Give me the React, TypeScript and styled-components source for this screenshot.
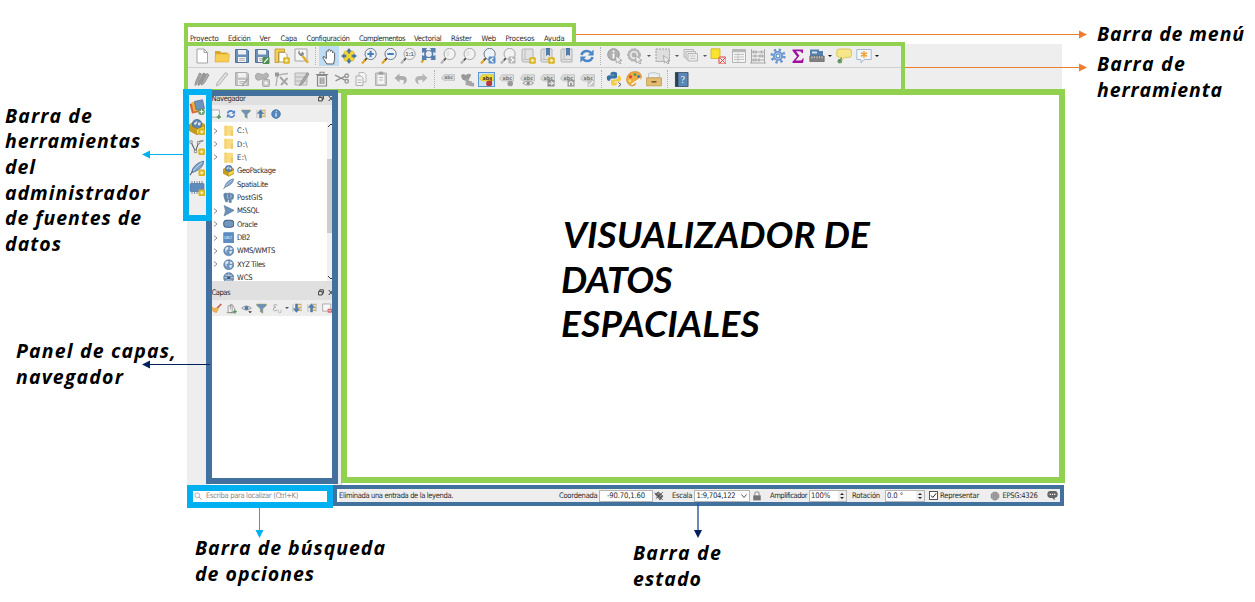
import React, { useLayoutEffect, useRef, useState } from 'react';
import styled, { createGlobalStyle } from 'styled-components';

const GREEN = '#92d050';
const NAVY = '#41719c';
const CYAN = '#00b0f0';
const ORANGE = '#ed7d31';
const DARK = '#002060';

const GlobalStyle = createGlobalStyle`
  * { box-sizing: border-box; }
  html, body { margin: 0; background: #fff; overflow: hidden; }
  body {
    font-family: "DejaVu Sans Condensed", "DejaVu Sans", sans-serif;
    font-stretch: condensed;
    font-size: 7.6px;
    color: #2a2a2a;
  }
`;

const Page = styled.main`
  position: relative;
  width: 1255px;
  height: 602px;
  overflow: hidden;
  background: #fff;
`;

const Window = styled.section`
  width: 877px;
  margin-left: 187px;
  padding-top: 30px;
  display: flex;
  flex-direction: column;
`;

const FitBox = styled.span`
  display: inline-block;
  flex: none;
  white-space: pre;
`;

/* Text whose tracking is adjusted so that it fills a given width. */
function Fit({ w, children }: { w: number; children: string }) {
  const ref = useRef<HTMLSpanElement>(null);
  const [spacing, setSpacing] = useState(0);
  useLayoutEffect(() => {
    if (ref.current) {
      const natural = ref.current.getBoundingClientRect().width;
      setSpacing((w - natural) / children.length);
    }
  }, [w, children]);
  return <FitBox ref={ref} style={{ letterSpacing: `${spacing}px` }}>{children}</FitBox>;
}

/* ---------- icons, all on a 16 × 16 grid ---------- */

const Lens = ({ c = '#6b7b8c', h = '#e0a526', f = '#eef3f8' }) => (
  <>
    <path d="M5.5 10.5 1 15.5" stroke={h} strokeWidth="2.2" />
    <path d="M6 10 4 12.2" stroke="#444" strokeWidth="1.4" />
    <circle cx="9.6" cy="6" r="5.6" fill={f} stroke={c} strokeWidth="1" />
  </>
);
const GrayLens = () => <Lens c="#a5a5a5" h="#b5b5b5" f="#f2f2f2" />;
const Star = ({ x = 12, y = 12 }) => (
  <g transform={`translate(${x} ${y})`}>
    <rect x="-3.3" y="-3.3" width="6.6" height="6.6" rx="1.4" fill="#d9b21c" />
    <path d="M-2 0H2M0-2V2M-1.3-1.3 1.3 1.3M-1.3 1.3 1.3-1.3" stroke="#fff6c8" strokeWidth=".7" />
  </g>
);
const Cursor = ({ c = '#9a9a9a' }) => (
  <path d="M8.5 7.5 15 12.5 12.4 12.8 14 15.4 12.6 16 11.2 13.4 9.4 15Z" fill="#f3f3f3" stroke={c} strokeWidth=".8" />
);
const Tag = ({ bg = '#dedede', fg = '#777', edge = '#b5b5b5' }) => (
  <>
    <path d="M1 6 3.5 3H15.5V9.5H3.5L1 7.8Z" fill={bg} stroke={edge} strokeWidth=".8" />
    <text x="3.8" y="8.4" fontSize="5.6" fontWeight="700" fill={fg}>abc</text>
  </>
);
const Disk = ({ c = '#6b8fb9', d = '#4f7099' }) => (
  <>
    <path d="M1.5 1.5H13L14.5 3V14.5H1.5Z" fill={c} stroke={d} />
    <path d="M4 2H12V6.5H4Z" fill="#eef0f2" />
    <path d="M4 9H12V14H4Z" fill="#f3f3f3" />
    <path d="M5.2 10.6H10.8M5.2 12.3H10.8" stroke="#999" strokeWidth=".7" />
  </>
);
const Globe = ({ c = '#6d93bd' }) => (
  <>
    <circle cx="8" cy="8" r="7" fill={c} stroke="#4d6e94" strokeWidth=".8" />
    <path d="M3 4.5Q6 2 8 3.5L7 6 4.5 8 5.5 11 3.5 9.5ZM9.5 3 13.5 5 12 7 9.5 6.5ZM9 8.5H13L11 13 9 11Z" fill="#dbe8f4" />
  </>
);
const Refresh = () => (
  <>
    <path d="M2.5 7Q3.5 3 8 3 10.5 3 12 5" fill="none" stroke="#4d86c6" strokeWidth="2.6" />
    <path d="M14.6 1.6V7.4H8.8Z" fill="#4d86c6" />
    <path d="M13.5 9Q12.5 13 8 13 5.5 13 4 11" fill="none" stroke="#4d86c6" strokeWidth="2.6" />
    <path d="M1.4 14.4V8.6H7.2Z" fill="#4d86c6" />
  </>
);
const Book = () => (
  <>
    <path d="M2 2Q2 1 3.5 1H13V14H3.5Q2 14 2 13Z" fill="#e2e2e2" stroke="#b2b2b2" />
    <path d="M2.5 12Q3 11.5 4.5 11.5H13M5 1V11.5" fill="none" stroke="#bdbdbd" />
  </>
);
const Ribbon = ({ x = 9 }) => <path d={`M${x - 1.5} 0H${x + 1.5}V7.5L${x} 6 ${x - 1.5} 7.5Z`} fill="#4c7fb8" stroke="#315d8e" strokeWidth=".6" />;
const Feather = () => (
  <>
    <path d="M2.5 12.5Q4 4 14.5 1 15 8 5 12Z" fill="#7fa3ca" stroke="#4a6d94" strokeWidth=".8" />
    <path d="M.8 15.2Q6 8 13 2.4" fill="none" stroke="#d8e4f0" strokeWidth=".8" />
    <path d="M.8 15.2 4 11" stroke="#4a5f75" strokeWidth="1.1" />
  </>
);
const GeoBox = () => (
  <>
    <path d="M.5 5.5 8 2 15.5 5.5V11.5L8 15.5 .5 11.5Z" fill="#d8ae24" stroke="#92720f" strokeWidth=".6" />
    <circle cx="8" cy="5.2" r="4.8" fill="#5d86b3" stroke="#38587d" strokeWidth=".6" />
    <path d="M4.8 4.4 8 1.8 7.8 4.4 6 6ZM9 3.6 12 3.8 11 6.6 9 6Z" fill="#dbe8f4" />
    <path d="M.5 6.8 8 10 15.5 6.8V11.5L8 15.5.5 11.5Z" fill="#f5d848" stroke="#92720f" strokeWidth=".6" />
    <path d="M8 10V15.5L.5 11.5V6.8Z" fill="#c79c1c" />
  </>
);
const Pencil = ({ c = '#b4b4b4' }) => <path d="M11.5 1.5 14 3 5.5 13.5 2.5 15 3 12Z" fill="#ddd" stroke={c} />;
const Hist = ({ up = false }) => (
  <>
    <path d="M9 2.5H14.5M9 7H14.5M9 11.5H14.5" stroke="#d9b35a" strokeWidth="2.4" />
    <path d="M8.5 1V13.5M14.8 1V13.5" stroke="#9a9a9a" strokeWidth=".8" />
    <path d={up ? 'M5.5 14.5V7H2L7 1 12 7H8.8V14.5Z' : 'M5.5 1.5V9H2L7 15 12 9H8.8V1.5Z'} fill="#4d7fb5" stroke="#345c8a" strokeWidth=".5" />
    <path d="M1.5 1.5V14.5" stroke="#a5a5a5" />
  </>
);
const Funnel = () => <path d="M1 1.5H15V3.5L10 8.5V15L6.2 12.8V8.5L1 3.5Z" fill="#6992be" stroke="#b69a3c" strokeWidth=".7" />;

const icons: Record<string, React.ReactNode> = {
  file: <path d="M3 1H10L13.5 4.5V15H3ZM10 1V4.5H13.5" fill="#fff" stroke="#9b9b9b" strokeWidth=".9" />,
  folder: <><path d="M1 3H6L7 4.5H13.5V13.5H1Z" fill="#d9a62a" /><path d="M1.6 6H15.4L14.6 14H1Z" fill="#f7ce52" stroke="#dba72d" strokeWidth=".6" /></>,
  save: <Disk />,
  saveAs: <><Disk /><rect x="8.5" y="9" width="7" height="7" rx="1" fill="#4f8c51" /><path d="M10 14.6 14 10.4" stroke="#fff" strokeWidth="1.2" /></>,
  layout: <><path d="M1 1H10.5V4H4.5V14.5H1Z" fill="#f4cf57" stroke="#b98f1d" strokeWidth=".8" /><path d="M5 4.5H11L13 6.5V14H5Z" fill="#fff" stroke="#a59158" strokeWidth=".8" /><Star x={12.5} y={12.5} /></>,
  wrench: <><path d="M1 1H13V13H1Z" fill="#f6f6f6" stroke="#a5a5a5" /><path d="M8.5 8 14 14.8" stroke="#e0ad2d" strokeWidth="2.4" /><path d="M4 4.5Q5 8 8 8.3L10 6.5Q10 5 8.5 3.5L7 5.5 5.6 4.8 6 2.6Q4.3 3 4 4.5Z" fill="#8a8a8a" /></>,
  hand: <path d="M5.5 15 2 9.5Q1.3 8 2.8 8L5 10V3.4Q5.8 2 6.8 3.2V2Q7.8.7 8.8 2V3Q9.8 1.8 10.8 3V4.4Q12 3.4 12.8 4.8V10.5L11.8 15Z" fill="#fff" stroke="#444" strokeWidth=".8" />,
  pan: <><rect x="3" y="3" width="10" height="10" rx="1.5" fill="#f3d72e" stroke="#d8bd22" strokeWidth=".6" /><path d="M8 0 10.8 3.4H9.2V5.4H6.8V3.4H5.2ZM8 16 5.2 12.6H6.8V10.6H9.2V12.6H10.8ZM0 8 3.4 5.2V6.8H5.4V9.2H3.4V10.8ZM16 8 12.6 10.8V9.2H10.6V6.8H12.6V5.2Z" fill="#50789f" /></>,
  zoomIn: <><Lens /><path d="M6.4 6H12.8M9.6 2.8V9.2" stroke="#4a7db5" strokeWidth="2" /></>,
  zoomOut: <><Lens /><path d="M6.4 6H12.8" stroke="#4a7db5" strokeWidth="2" /></>,
  zoomNative: <><GrayLens /><text x="5.2" y="8" fontSize="5.5" fontWeight="700" fill="#777">1:1</text></>,
  zoomFull: <><path d="M6 8 1.5 14.5" stroke="#e0a526" strokeWidth="2.2" /><path d="M5 5H12V10H5Z" fill="#f1f1f1" /><path d="M2 0H7L5.8 2.2H11.2L10 0H15.5V5L13.3 4V8L15.5 7V12H10.5L11.5 10H6L7 12H2V7L4.2 8V4L2 5Z" fill="#557eab" /><circle cx="8.8" cy="5.9" r="3" fill="#e7edf4" /></>,
  zoomSel: <><GrayLens /><path d="M6.5 3H9.2V8H6.5Z" fill="#e3e3e3" /></>,
  zoomLast: <><Lens /><rect x="8.5" y="8.5" width="7" height="7" rx="1" fill="#5b8ec4" /><path d="M13.4 9.8 10.5 12 13.4 14.2" fill="none" stroke="#fff" strokeWidth="1.2" /></>,
  zoomNext: <><GrayLens /><rect x="8.5" y="8.5" width="7" height="7" rx="1" fill="#b5b5b5" /><path d="M10.8 9.8 13.6 12 10.8 14.2" fill="none" stroke="#fff" strokeWidth="1.2" /></>,
  book: <><Book /><Star x={12.5} y={12.5} /></>,
  bookRibbon: <><Book /><Ribbon /><Star x={12.5} y={12.5} /></>,
  bookmark: <><Book /><Ribbon /></>,
  refresh: <Refresh />,
  identify: <><circle cx="6.5" cy="6.5" r="5.8" fill="#b1b1b1" stroke="#979797" /><path d="M6.5 2.6V4.2M6.5 5.5V10.5" stroke="#fff" strokeWidth="1.7" /><Cursor /></>,
  action: <><circle cx="7" cy="7" r="5.2" fill="#e6e6e6" stroke="#b5b5b5" strokeWidth="2" /><circle cx="7" cy="7" r="6.4" fill="none" stroke="#aaa" strokeWidth="1" strokeDasharray="2 1.7" /><circle cx="7" cy="7" r="2.4" fill="#b5b5b5" /><Cursor /></>,
  select: <><path d="M1 1H14.5V13.5H1Z" fill="#dedede" stroke="#9f9f9f" strokeDasharray="2 1" /><Cursor /></>,
  selectForm: <><path d="M1 1.5H10.5V9H1Z" fill="#ececec" stroke="#b5b5b5" /><path d="M3 3.5H12.5V11H3Z" fill="#ececec" stroke="#b5b5b5" /><path d="M5 5.5H14.5V13H5Z" fill="#ececec" stroke="#b5b5b5" /><path d="M7 8H12.5M7 10.5H12.5" stroke="#c5c5c5" /></>,
  deselect: <><path d="M1 .8H10V10.5H1Z" fill="#f9e32d" stroke="#cdb31c" strokeWidth=".8" /><rect x="9" y="9" width="7" height="7" rx="1" fill="#fbe5e5" stroke="#d64545" /><path d="M10 15 15 10M10.3 10.3 14.7 14.7" stroke="#d64545" strokeWidth="1" /></>,
  table: <><path d="M1.5 1.5H14.5V14.5H1.5Z" fill="#f4f4f4" stroke="#b5b5b5" /><path d="M2 3H14" stroke="#b8b8b8" strokeWidth="2.4" /><path d="M3 6.5H13M3 9H13M3 11.5H13M7 5V14" stroke="#c2c2c2" strokeWidth="1" /></>,
  abacus: <><path d="M1.5 1V15M14.5 1V15M1 4H15M1 8H15M1 12H15M0 15H16" stroke="#a9a9a9" strokeWidth="1" /><path d="M3.5 2.5V5.5M6 2.5V5.5M11.5 2.5V5.5M5 6.5V9.5M10 6.5V9.5M12.5 6.5V9.5M3.5 10.5V13.5M6 10.5V13.5M9 10.5V13.5" stroke="#aeaeae" strokeWidth="1.6" /></>,
  gear: <><circle cx="8" cy="8" r="6.2" fill="none" stroke="#6b96cd" strokeWidth="2.8" strokeDasharray="2.3 2.57" /><circle cx="8" cy="8" r="3.6" fill="#6b96cd" stroke="#6b96cd" strokeWidth="3" /><circle cx="8" cy="8" r="3" fill="none" stroke="#b7cdea" strokeWidth=".9" /><circle cx="8" cy="8" r="1.2" fill="#fff" /></>,
  sigma: <path d="M2.5 1.5H13V5H11.8Q11.4 3.2 9.6 3.2H6L9.4 7.8 5.6 12.6H10Q12 12.6 12.6 10.4H13.8L13 15H2.5V13.8L7 8.4 2.5 2.8Z" fill="#a010a0" />,
  measure: <><path d="M1 1.5H10V3H14V8H1Z" fill="#557fad" /><path d="M3 3.6H8V5.4H3Z" fill="#dce8f3" /><path d="M.8 8H15.2V13.5H.8Z" fill="#808080" stroke="#666" strokeWidth=".7" /><path d="M3 8.2V10.5M5.5 8.2V10M8 8.2V10.5M10.5 8.2V10M13 8.2V10.5" stroke="#ddd" strokeWidth=".8" /></>,
  bubble: <><path d="M3 1H13Q15.6 1 15.6 4V6.5Q15.6 9.4 13 9.4H8.6L5.5 12.6V9.4H3.4Q.7 9.4.7 6.5V4Q.7 1 3 1Z" fill="#f8e788" stroke="#d4bc4e" strokeWidth=".8" /><circle cx="3.8" cy="13.2" r="2.3" fill="#6a9a6a" /><path d="M2.4 13 5.8 9.8" stroke="#447744" /></>,
  annotation: <><path d="M.8 1.5H15.2V11.5H8L5 15V11.5H.8Z" fill="#f4f7fa" stroke="#a5b9cc" /><path d="M8 3V10M4.9 4.7 11.1 8.3M4.9 8.3 11.1 4.7" stroke="#f0a02f" strokeWidth="1.4" /></>,
  pencils: <><path d="M5.5 2 7.5 3 3 13 1 14.5 1.5 11Z" fill="#a5a5a5" stroke="#989898" /><path d="M9.5 2 12 3.4 6.6 13 4 14.5 4.6 11.5Z" fill="#999" stroke="#909090" /><path d="M13 2.4 15 4 10 12.5 7.5 14 8 11.5Z" fill="#adadad" stroke="#959595" /></>,
  pencil: <Pencil />,
  saveGray: <><Disk c="#c2c2c2" d="#adadad" /><path d="M14.5 7 8 15" stroke="#a5a5a5" strokeWidth="1.6" /></>,
  addFeature: <><path d="M1.5 4Q3 1 6 3 10 4.5 12 2 15.5 2.5 14 6 12.5 9 9 8 7 7.5 5.5 9 1 10 1.5 4Z" fill="#b5b5b5" stroke="#a5a5a5" /><rect x="8.5" y="8.5" width="7" height="7" rx="1" fill="#c5c5c5" stroke="#aaa" /><path d="M12 10V14M10 12H14" stroke="#fff" /></>,
  vertex: <><path d="M2 15 3.5 4 14 2.5" fill="none" stroke="#b0b0b0" strokeWidth="1.3" /><rect x="1" y="1.5" width="4" height="4" fill="#999" /><path d="M6 6 13.5 13.8M13.5 7 7 14" stroke="#a5a5a5" strokeWidth="1.9" /></>,
  form: <><path d="M1 2H13V14H1ZM1 6H13M1 10H13" fill="#dcdcdc" stroke="#b5b5b5" /><path d="M13.5 1.5 7 11 5.6 14.6 8.8 12.4 15 3Z" fill="#aaa" stroke="#8d8d8d" strokeWidth=".8" /></>,
  trash: <><path d="M3.5 4.5H12.5V15H3.5Z" fill="#ececec" stroke="#8a8a8a" strokeWidth="1.2" /><path d="M1.8 3.5H14.2M6 3V1.3H10V3M6.2 6.5V13M8 6.5V13M9.8 6.5V13" fill="none" stroke="#8a8a8a" strokeWidth="1.1" /></>,
  scissors: <><path d="M1 4.2 11 9.2M1.5 9.8 11.5 5.2" stroke="#929292" strokeWidth="1.3" /><circle cx="12.7" cy="4.8" r="1.8" fill="none" stroke="#959595" strokeWidth="1.3" /><circle cx="12.7" cy="10.3" r="1.8" fill="none" stroke="#959595" strokeWidth="1.3" /></>,
  copy: <><path d="M6 1.5H11L13 3.5V11H6Z" fill="#f4f4f4" stroke="#b8b8b8" /><path d="M3 5H8L10 7V14.5H3Z" fill="#f4f4f4" stroke="#adadad" /><path d="M4.5 9H8.5M4.5 11.5H8.5" stroke="#b5b5b5" /></>,
  paste: <><path d="M2.5 2H13.5V14.5H2.5Z" fill="#c8c8c8" stroke="#b0b0b0" /><path d="M4.5 4H11.5V13H4.5Z" fill="#f3f3f3" /><path d="M6 1H10V3.2H6ZM6 6.5H10M6 9H10" fill="#999" stroke="#aaa" strokeWidth=".8" /></>,
  undo: <path d="M6.5 2.5V5H10Q14 5.5 13.8 9.3 13.4 12.5 9.5 13.6 11.5 11.5 11 9.8 10.3 8.6 6.5 8.8V11.4L1.5 7Z" fill="#adadad" />,
  redo: <path d="M9.5 2.5V5H6Q2 5.5 2.2 9.3 2.6 12.5 6.5 13.6 4.5 11.5 5 9.8 5.7 8.6 9.5 8.8V11.4L14.5 7Z" fill="#b5b5b5" />,
  tag: <Tag />,
  diagram: <><path d="M1 4Q3 .5 6 3.5 9 .5 12 3L10 7 6.5 9.5 2.5 8Z" fill="#999" /><path d="M6 7.5H9.5V14H6ZM9 9.5H12.5V15H9ZM12 11.5H15V15.5H12Z" fill="#a5a5a5" /></>,
  tagActive: <><Tag bg="#f6df35" fg="#2a2a2a" edge="#d6bd26" /><circle cx="10.8" cy="12.2" r="3.2" fill="#b93a3a" /><path d="M13 6V11" stroke="#c8342e" strokeWidth="1.4" /></>,
  tagPin: <><Tag /><circle cx="12" cy="12.2" r="3" fill="#9a9a9a" /></>,
  tagEye: <><Tag /><path d="M3 12Q8.5 7.5 14.5 12 8.5 16 3 12Z" fill="#ededed" stroke="#999" /><circle cx="8.8" cy="12" r="1.7" fill="#888" /></>,
  tagMove: <><Tag /><rect x="8" y="8.5" width="7.5" height="7" fill="#8f8f8f" /><path d="M9.3 12H12.5M11.8 10 14.3 12 11.8 14" stroke="#fff" fill="none" strokeWidth="1.1" /></>,
  tagRotate: <><Tag /><rect x="8" y="8.5" width="7.5" height="7" fill="#999" /><path d="M10.2 14Q9 10.5 12 10.3 14.5 10.8 13.4 14" stroke="#fff" fill="none" strokeWidth="1.1" /></>,
  tagEdit: <><Tag /><rect x="8" y="8.5" width="7.5" height="7" fill="#c4c4c4" /><path d="M9.5 14.5 14 10" stroke="#fff" strokeWidth="1.3" /></>,
  python: <><path d="M4.5 4V2.2Q5 .8 8 .8 11 .8 11 2.6V6Q11 7.6 9.3 7.6H6Q4 7.6 4 9.8H2.4Q.8 9.6.8 7 .8 4.2 3 4.2H8V3.8Z" fill="#3873a6" /><path d="M11.7 4.5H13Q15 4.8 15 7.6 15 10.6 13 10.6H8V11.4H11V13Q10.6 14.8 7.8 14.8 5 14.6 5 12.8V10Q5 8.4 6.8 8.4H10Q11.7 8.2 11.7 6.4Z" fill="#f7cb3c" /><path d="M12.5 11.5 15 13.5 12.5 15.5" fill="none" stroke="#555" /></>,
  palette: <><path d="M9 .6Q15 .6 15.4 6 15.4 9 12 9 9.5 9 9.5 12 9.5 15 6 15 .6 13.5.6 8 1.5 1 9 .6Z" fill="#efac45" stroke="#c98528" strokeWidth=".7" /><circle cx="4.5" cy="5.8" r="1.7" fill="#d74a3a" /><circle cx="9" cy="3.6" r="1.5" fill="#5d9b50" /><circle cx="3.8" cy="9.8" r="1.4" fill="#f7e06a" /><circle cx="12.6" cy="5.4" r="1.5" fill="#4779b5" /><path d="M14.5 7.5 5.5 13.5" stroke="#fff" strokeWidth="1.5" /></>,
  drawer: <><path d="M2.5 7V2.5L8 1.5 13.5 3V7Z" fill="#e9eff2" stroke="#aebbc2" strokeWidth=".8" /><path d="M.5 6.8H15.5V14.8H.5Z" fill="#e3bd74" stroke="#c29a4f" strokeWidth=".8" /><path d="M5.5 10.8H10.5" stroke="#7d5a20" strokeWidth="1.6" /></>,
  help: <><path d="M1.5.5H15V15.5H1.5Z" fill="#5b87b6" stroke="#2d4158" strokeWidth=".8" /><path d="M1.5.5H4.6V15.5H1.5Z" fill="#2b3f57" /><text x="7.2" y="11.8" fontSize="10" fontFamily="Liberation Serif, serif" fill="#fff">?</text></>,
  layers: <><path d="M.5 5 7 3.5 10 13 3 14.5Z" fill="#d8633b" /><path d="M2.5 3 10 2.5 11.5 11.5 4.5 12.5Z" fill="#efb23a" /><path d="M5.5 2.4 13.5.8 15.5 9.5 7 11Z" fill="#6b93c0" stroke="#4a6f9a" strokeWidth=".7" /><circle cx="12.5" cy="12.7" r="3.3" fill="#639966" /><path d="M10.5 12.7H14.5M12.5 10.7V14.7" stroke="#fff" /></>,
  geopackNew: <><GeoBox /><Star x={12.8} y={12.8} /></>,
  shapeNew: <><path d="M2 3 6.5 12.5 9.5 3.5Q11 1.5 14.5 2" fill="none" stroke="#5c666f" strokeWidth="1.1" /><path d="M.8 1.8H3.2V4.2H.8ZM8.4 2.4H10.8V4.8H8.4ZM5.3 11.2H7.7V13.6H5.3Z" fill="#eee" stroke="#777" strokeWidth=".7" /><Star x={12.6} y={12.8} /></>,
  featherNew: <><Feather /><Star x={12.8} y={12.8} /></>,
  chipNew: <><path d="M3 1V14M5.5 1V14M8 1V14M10.5 1V14M13 1V14" stroke="#7b8fa5" strokeWidth="1" /><rect x="1" y="3.5" width="14" height="8" rx=".8" fill="#5f8bbd" stroke="#5579a3" strokeWidth=".7" /><Star x={12.8} y={12.8} /></>,
  addLayer: <><path d="M1 1.5H13.5V13H1Z" fill="#f7f7f7" stroke="#999" strokeWidth="1.2" /><path d="M9 12.7H16M12.5 9.2V16" stroke="#5c9a5d" strokeWidth="2.4" /></>,
  funnel: <Funnel />,
  collapse: <Hist up />,
  expand: <Hist />,
  info: <><circle cx="8" cy="8" r="7" fill="#5387be" stroke="#3c6a9c" /><path d="M8.6 3.6V5.2M8 6.8V12.2" stroke="#fff" strokeWidth="1.8" /></>,
  drive: <><path d="M2 1H9L14 1.5V15H2Z" fill="#f8dc84" /><path d="M2 1H5V15H2Z" fill="#f4d272" /><path d="M11 7.5H14V15H11Z" fill="#eccb6b" /></>,
  geopack: <GeoBox />,
  feather: <Feather />,
  elephant: <><path d="M1 3Q3 .5 6 2 9 .5 11 2 15 1.5 15 6 15 9 13 10.5L11.5 9.5V14.5H8.5V10.5L6.5 11 6 14 3.8 13.5Q1 8 1 3Z" fill="#6386ab" stroke="#4f7094" strokeWidth=".7" /><path d="M6.5 3.5Q5.5 7 7.5 9.5M10.5 3.5Q12.5 6 10.5 8.5" fill="none" stroke="#cbd9e7" /></>,
  mssql: <path d="M1.5.8 15.5 7.5 1.5 15.2Q5.2 8 1.5.8Z" fill="#6c90b6" stroke="#4a6e95" strokeWidth=".8" />,
  oracle: <rect x="1" y="3" width="14" height="10" rx="4.2" fill="#7396bd" stroke="#3f5f84" strokeWidth="1.4" />,
  db2: <><rect x=".8" y=".8" width="14.4" height="14.4" rx=".7" fill="#5c8cc0" stroke="#6594c6" /><text x="1.6" y="9.4" fontSize="6" fill="#e5eef7">DB2</text></>,
  globe: <Globe />,
  wcs: <><circle cx="8" cy="8" r="7" fill="#6c90b6" stroke="#44648a" /><path d="M8 1V15M1 8H15M3 4Q8 7 13 4M3 12Q8 9 13 12" fill="none" stroke="#e1ebf4" strokeWidth=".9" /><path d="M6 6H10V10H6Z" fill="#38587d" /></>,
  brush: <><path d="M15 1.5 9 7.5" stroke="#c65a4a" strokeWidth="2.4" /><path d="M.5 5.5 5 8 9 6 11 8.5 8 14 3 12.5Z" fill="#efb34a" stroke="#d8953a" strokeWidth=".6" /></>,
  group: <><path d="M3 4H9V14H3Z" fill="#eee" stroke="#888" /><path d="M6.5 9V2H9L12.5 8V14H6.5M1 14H13" fill="none" stroke="#888" /><path d="M13 9.5V15.5M10 12.5H16" stroke="#5c9a5d" strokeWidth="1.8" /></>,
  eye: <><path d="M1 7.5Q8 1 15 7.5 8 13 1 7.5Z" fill="#eee" stroke="#777" /><circle cx="8" cy="7.3" r="3" fill="#517aa5" /><path d="M10.5 12H16L13.2 15Z" fill="#333" /></>,
  epsilon: <><path d="M9 3Q4 1 4 4.2 4 6.2 7 6.4 3 6.5 3 9.5 4 12.5 9 10.5" fill="none" stroke="#a2a2a2" strokeWidth="1.3" /><path d="M10.5 9.5V13.5Q12.5 15.5 14.5 13.5V9.5" fill="none" stroke="#aaa" /></>,
  remove: <><path d="M1 1.5H14V13H1Z" fill="#f7f7f7" stroke="#999" strokeWidth="1.2" /><rect x="9" y="9" width="7" height="6.5" rx="1" fill="#dd6569" /><path d="M10.5 12.3H14.5" stroke="#fff" strokeWidth="1.2" /></>,
  search: <><circle cx="6.5" cy="6.5" r="4.8" fill="none" stroke="#888" strokeWidth="1.2" /><path d="M10 10 15 15" stroke="#888" strokeWidth="1.5" /></>,
  extents: <><path d="M2 5 7 1.5 14.5 8 9.5 14.5Z" fill="#8f8f8f" stroke="#555" /><path d="M1 3 14 14M3 12 14 2M4.5 4.5 7 2M7 7.5 9.5 5M9.5 11 13 8" stroke="#3d3d3d" strokeWidth="1.3" /></>,
  lock: <><path d="M4.5 7.5V4.5Q4.5 1.2 8 1.2 11.5 1.2 11.5 4.5V7.5" fill="none" stroke="#999" strokeWidth="1.8" /><rect x="2" y="7" width="12" height="8" fill="#757575" /></>,
  grid: <><circle cx="8" cy="8" r="7" fill="#858585" /><path d="M1 8H15M8 1V15M2.5 4.5H13.5M2.5 11.5H13.5M4.8 2Q2 8 4.8 14M11.2 2Q14 8 11.2 14" fill="none" stroke="#d0d0d0" strokeWidth=".6" /></>,
  message: <><path d="M4.5 1.5H11.5Q15.5 2 15.5 6.5 15.5 11 11 11.5L11.5 15 7.5 11.5H4.5Q.5 11 .5 6.5.5 2 4.5 1.5Z" fill="#656565" /><path d="M3.8 6.5H5.6M7.1 6.5H8.9M10.4 6.5H12.2" stroke="#fff" strokeWidth="1.8" /></>,
};

const Svg = styled.svg`
  flex: none;
  display: block;
`;
const Icon = ({ name, size = 16 }: { name: string; size?: number }) => (
  <Svg width={size} height={size} viewBox="0 0 16 16" fill="none">{icons[name]}</Svg>
);

/* ---------- window parts ---------- */

const MenuBar = styled.nav`
  height: 14px;
  padding: 3px 0 0 3px;
  display: flex;
  line-height: 11px;
`;
const MenuItem = styled.div<{ $w: number }>`
  flex: none;
  width: ${p => p.$w}px;
`;

const ToolRow = styled.div<{ $h: number; $top?: number }>`
  height: ${p => p.$h}px;
  width: 875px;
  padding: ${p => p.$top ?? 0}px 0 0 5px;
  display: flex;
  align-items: center;
  background: #eee;
  border-bottom: 1px solid #cfcfcf;
`;
const Slot = styled.span<{ $w?: number; $active?: boolean }>`
  flex: none;
  width: ${p => p.$w ?? 20}px;
  height: 20px;
  display: flex;
  align-items: center;
  justify-content: center;
  background: ${p => (p.$active ? '#bfdcf3' : 'transparent')};
`;
const LabelSlot = styled(Slot)`
  height: 15px;
  outline: 1px solid #5a95d6;
  outline-offset: -1px;
  background: #cfe3f6;
`;
const Grip = styled.span<{ $w: number }>`
  flex: none;
  width: ${p => p.$w}px;
  height: 18px;
  display: flex;
  justify-content: center;
  &::before {
    content: '';
    height: 18px;
    border-left: 1px dotted #b3b3b3;
  }
`;
const Caret = styled.span<{ $w: number; $c?: string }>`
  flex: none;
  width: ${p => p.$w}px;
  display: flex;
  justify-content: center;
  &::before {
    content: '';
    border: 2.5px solid transparent;
    border-top-color: ${p => p.$c ?? '#555'};
    border-bottom: 0;
  }
`;

const Body = styled.div`
  height: 394px;
  display: flex;
`;
const SourceBar = styled.aside`
  width: 23px;
  padding: 8px 0 0 2px;
  background: #eee;
  display: flex;
  flex-direction: column;
  flex: none;
`;
const SourceButton = styled.span`
  height: 20.2px;
  display: flex;
`;
const Dock = styled.div`
  width: 123px;
  flex: none;
  display: flex;
  flex-direction: column;
  background: #eee;
`;
const DockTitle = styled.header<{ $h: number }>`
  height: ${p => p.$h}px;
  flex: none;
  display: flex;
  align-items: center;
  padding: ${p => (p.$h > 15 ? 3 : 0)}px 0 0 1.5px;
  background: #e0e0e0;
  line-height: 11px;
`;
const TitleButtons = styled.span`
  margin-left: auto;
  display: flex;
  gap: 4px;
`;
const DockTools = styled.div<{ $h: number }>`
  height: ${p => p.$h}px;
  flex: none;
  display: flex;
  align-items: center;
  margin-left: -1.5px;
`;
const TreeArea = styled.div`
  height: 159px;
  flex: none;
  display: flex;
  overflow: hidden;
  background: #fff;
`;
const Tree = styled.div`
  width: 117px;
  padding-top: 2px;
`;
const TreeRow = styled.div`
  height: 13.36px;
  display: flex;
  align-items: center;
  line-height: 13px;
`;
const TreeArrow = styled.span`
  width: 12.5px;
  display: flex;
  padding-left: 2.5px;
`;
const TreeIcon = styled.span`
  width: 14.5px;
  display: flex;
`;
const ScrollTrack = styled.div`
  width: 6px;
  background: #f0f0f0;
  display: flex;
  flex-direction: column;
  justify-content: space-between;
`;
const ScrollThumb = styled.div`
  height: 74px;
  margin-bottom: 11px;
  background: #cdcdcd;
`;
const LayerArea = styled.div`
  flex: 1;
  background: #fff;
`;
const Splitter = styled.div`
  width: 9px;
  background: #f0f0f0;
  border-right: 1px solid #c9c9c9;
`;
const Canvas = styled.div`
  flex: 1;
  background: #fff;
  padding: 121px 0 0 219px;
  font: italic 700 37px/44.5px Lato, "Open Sans", sans-serif;
  color: #000;
`;
const CanvasLine = styled.div<{ $x?: number }>`
  height: 44.5px;
  padding-left: ${p => p.$x ?? 0}px;
`;

const StatusBar = styled.footer`
  height: 21px;
  width: 877px;
  padding-left: 6px;
  background: #eee;
  display: flex;
  align-items: center;
  line-height: 11px;
`;
const Cell = styled.span<{ $w: number; $pad?: number }>`
  flex: none;
  width: ${p => p.$w}px;
  padding-left: ${p => p.$pad ?? 0}px;
  display: flex;
  align-items: center;
`;
const Field = styled(Cell)`
  height: 12px;
  background: #fff;
  border: 1px solid #b5b5b5;
  justify-content: space-between;
`;
const SearchField = styled(Cell)`
  height: 12px;
  background: #fff;
  color: #888;
  gap: 4px;
`;
const Spin = styled.span`
  width: 8px;
  height: 10px;
  background: #eee;
  display: flex;
  flex-direction: column;
  align-items: center;
  justify-content: center;
  gap: 2px;
  &::before, &::after { content: ''; border: 2px solid transparent; }
  &::before { border-bottom-color: #222; border-top: 0; }
  &::after { border-top-color: #222; border-bottom: 0; }
`;
const CheckBox = styled.span`
  width: 9px;
  height: 9px;
  background: #fff;
  border: 1px solid #555;
  display: flex;
`;

/* ---------- callouts drawn over the window ---------- */

const Frame = styled.div<{ $x: number; $y: number; $w: number; $h: number; $b: number; $c: string }>`
  position: absolute;
  left: ${p => p.$x}px;
  top: ${p => p.$y}px;
  width: ${p => p.$w}px;
  height: ${p => p.$h}px;
  border: ${p => p.$b}px solid ${p => p.$c};
`;
const Arrows = styled.svg`
  position: absolute;
  left: 0;
  top: 0;
`;
const Callout = styled.div<{ $x: number; $y: number; $lh?: number }>`
  position: absolute;
  left: ${p => p.$x}px;
  top: ${p => p.$y}px;
  display: flex;
  flex-direction: column;
  align-items: flex-start;
  font: italic 700 19.5px/${p => p.$lh ?? 26}px "Open Sans", "Noto Sans", sans-serif;
  color: #000;
`;

const Chevron = ({ d, c = '#888' }: { d: string; c?: string }) => (
  <Svg width="6" height="6" viewBox="0 0 6 6"><path d={d} fill="none" stroke={c} strokeWidth="1" /></Svg>
);
const WindowButtons = () => (
  <TitleButtons>
    <Svg width="6" height="7" viewBox="0 0 6 7"><path d="M1.8 2V.8H5.4V4.2H4.2M.6 2.4H4.2V6H.6Z" fill="none" stroke="#333" strokeWidth=".9" /></Svg>
    <Svg width="5" height="7" viewBox="0 0 5 7"><path d="M.8 1 5 6M5 1 .8 6" stroke="#333" /></Svg>
  </TitleButtons>
);

const menu: [string, number, number][] = [
  ['Proyecto', 28.5, 38], ['Edición', 22.5, 31.5], ['Ver', 11, 21], ['Capa', 16.5, 26],
  ['Configuración', 43, 52.5], ['Complementos', 46, 55], ['Vectorial', 27.5, 37],
  ['Ráster', 20.5, 30.5], ['Web', 14.5, 24], ['Procesos', 29, 38.5], ['Ayuda', 20.5, 25],
];
const fileTools = ['file', 'folder', 'save', 'saveAs', 'layout', 'wrench'];
const mapTools = ['pan', 'zoomIn', 'zoomOut', 'zoomNative', 'zoomFull', 'zoomSel', 'zoomSel', 'zoomLast', 'zoomNext', 'book', 'bookRibbon', 'bookmark', 'refresh'];
const editTools = ['pencils', 'pencil', 'saveGray', 'addFeature', 'vertex', 'form', 'trash', 'scissors', 'copy', 'paste', 'undo', 'redo'];
const labelTools = ['tagPin', 'tagEye', 'tagMove', 'tagRotate', 'tagEdit'];
const tree: [string, string, number, boolean][] = [
  ['drive', 'C:\\', 11, true], ['drive', 'D:\\', 11, true], ['drive', 'E:\\', 10, true],
  ['geopack', 'GeoPackage', 38.5, false], ['feather', 'SpatiaLite', 31, false], ['elephant', 'PostGIS', 25.5, false],
  ['mssql', 'MSSQL', 22, true], ['oracle', 'Oracle', 20.5, true], ['db2', 'DB2', 13, true],
  ['globe', 'WMS/WMTS', 38, true], ['globe', 'XYZ Tiles', 28, true], ['wcs', 'WCS', 15.5, false],
];

export default function App() {
  return (
    <Page>
      <GlobalStyle />
      <Window>
        <MenuBar>
          {menu.map(([label, w, slot]) => <MenuItem key={label} $w={slot}><Fit w={w}>{label}</Fit></MenuItem>)}
        </MenuBar>
        <ToolRow $h={24} $top={1}>
          {fileTools.map(n => <Slot key={n}><Icon name={n} /></Slot>)}
          <Grip $w={7} />
          <Slot $active><Icon name="hand" size={17} /></Slot>
          {mapTools.map((n, i) => <Slot key={i} $w={19.85}><Icon name={n} /></Slot>)}
          <Grip $w={8} />
          <Slot><Icon name="identify" /></Slot>
          <Slot $w={21}><Icon name="action" /></Slot>
          <Caret $w={6} />
          <Slot $w={22}><Icon name="select" /></Slot>
          <Caret $w={6} />
          <Slot $w={22}><Icon name="selectForm" /></Slot>
          <Caret $w={6} />
          <Slot $w={21}><Icon name="deselect" /></Slot>
          {['table', 'abacus', 'gear', 'sigma', 'measure'].map(n => <Slot key={n} $w={19.6}><Icon name={n} /></Slot>)}
          <Caret $w={7} $c="#111" />
          <Slot><Icon name="bubble" /></Slot>
          <Slot><Icon name="annotation" /></Slot>
          <Caret $w={7} $c="#111" />
        </ToolRow>
        <ToolRow $h={23}>
          {editTools.map(n => <Slot key={n} $w={19.95}><Icon name={n} /></Slot>)}
          <Grip $w={6.5} />
          <Slot><Icon name="tag" size={14} /></Slot>
          <Slot><Icon name="diagram" size={15} /></Slot>
          <LabelSlot $w={17}><Icon name="tagActive" size={15} /></LabelSlot>
          <Slot $w={23}><Icon name="tagPin" size={15} /></Slot>
          {labelTools.slice(1).map(n => <Slot key={n}><Icon name={n} size={15} /></Slot>)}
          <Grip $w={6.5} />
          {['python', 'palette', 'drawer'].map(n => <Slot key={n}><Icon name={n} size={16} /></Slot>)}
          <Grip $w={7} />
          <Slot><Icon name="help" size={15} /></Slot>
        </ToolRow>
        <Body>
          <SourceBar>
            {['layers', 'geopackNew', 'shapeNew', 'featherNew', 'chipNew'].map(n => <SourceButton key={n}><Icon name={n} /></SourceButton>)}
          </SourceBar>
          <Dock>
            <DockTitle $h={14}><Fit w={34}>Navegador</Fit><WindowButtons /></DockTitle>
            <DockTools $h={17}>
              {['addLayer', 'refresh', 'funnel', 'collapse', 'info'].map(n => <Slot key={n} $w={15}><Icon name={n} size={10} /></Slot>)}
            </DockTools>
            <TreeArea>
              <Tree>
                {tree.map(([icon, label, w, open]) => (
                  <TreeRow key={label}>
                    <TreeArrow>{open && <Chevron d="M1 .5 4 3 1 5.5" />}</TreeArrow>
                    <TreeIcon><Icon name={icon} size={11.5} /></TreeIcon>
                    <Fit w={w}>{label}</Fit>
                  </TreeRow>
                ))}
              </Tree>
              <ScrollTrack>
                <Chevron d="M1 5 4 2 7 5" c="#333" />
                <ScrollThumb />
                <Chevron d="M1 1 4 4 7 1" c="#333" />
              </ScrollTrack>
            </TreeArea>
            <DockTitle $h={19}><Fit w={18.5}>Capas</Fit><WindowButtons /></DockTitle>
            <DockTools $h={16}>
              {['brush', 'group', 'eye', 'funnel', 'epsilon'].map(n => <Slot key={n} $w={15}><Icon name={n} size={11} /></Slot>)}
              <Caret $w={6} />
              {['expand', 'collapse', 'remove'].map(n => <Slot key={n} $w={15}><Icon name={n} size={10} /></Slot>)}
            </DockTools>
            <LayerArea />
          </Dock>
          <Splitter />
          <Canvas>
            <CanvasLine $x={2}><Fit w={307}>VISUALIZADOR DE</Fit></CanvasLine>
            <CanvasLine><Fit w={111}>DATOS</Fit></CanvasLine>
            <CanvasLine><Fit w={199}>ESPACIALES</Fit></CanvasLine>
          </Canvas>
        </Body>
        <StatusBar>
          <SearchField $w={146} $pad={1}><Icon name="search" size={8} /><Fit w={92}>Escriba para localizar (Ctrl+K)</Fit></SearchField>
          <Cell $w={220}><Fit w={114}>Eliminada una entrada de la leyenda.</Fit></Cell>
          <Cell $w={40}><Fit w={38.5}>Coordenada</Fit></Cell>
          <Field $w={54} $pad={7}><Fit w={38}>-90.70,1.60</Fit></Field>
          <Cell $w={19} $pad={1}><Icon name="extents" size={10} /></Cell>
          <Cell $w={22}><Fit w={20}>Escala</Fit></Cell>
          <Field $w={56} $pad={1.5}><Fit w={39}>1:9,704,122</Fit><Cell $w={8}><Chevron d="M.5 1.5 3 4.5 5.5 1.5" c="#555" /></Cell></Field>
          <Cell $w={20} $pad={2}><Icon name="lock" size={10} /></Cell>
          <Cell $w={39}><Fit w={37}>Amplificador</Fit></Cell>
          <Field $w={38} $pad={1}><Fit w={19}>100%</Fit><Spin /></Field>
          <Cell $w={38} $pad={5}><Fit w={28}>Rotación</Fit></Cell>
          <Field $w={40} $pad={1}><Fit w={16}>0.0 °</Fit><Spin /></Field>
          <Cell $w={15} $pad={4}><CheckBox><Svg width="7" height="7" viewBox="0 0 7 7"><path d="M1 3.5 2.8 5.5 6.2 1.3" fill="none" stroke="#222" /></Svg></CheckBox></Cell>
          <Cell $w={50}><Fit w={39}>Representar</Fit></Cell>
          <Cell $w={12.5}><Icon name="grid" size={10} /></Cell>
          <Cell $w={44}><Fit w={35}>EPSG:4326</Fit></Cell>
          <Icon name="message" size={11} />
        </StatusBar>
      </Window>

      <Frame $x={184} $y={23} $w={392} $h={23} $b={4} $c={GREEN} />
      <Frame $x={184} $y={42} $w={721} $h={51} $b={4} $c={GREEN} />
      <Frame $x={341} $y={89} $w={724} $h={394} $b={6} $c={GREEN} />
      <Frame $x={206} $y={90} $w={132} $h={394} $b={6} $c={NAVY} />
      <Frame $x={183} $y={89} $w={29} $h={132} $b={6} $c={CYAN} />
      <Frame $x={333} $y={485} $w={731} $h={21} $b={4} $c={NAVY} />
      <Frame $x={187} $y={485} $w={146} $h={23} $b={6} $c={CYAN} />

      <Arrows width="1255" height="602" viewBox="0 0 1255 602">
        <path d="M576 34.5H1080M905 67.5H1080" stroke={ORANGE} />
        <path d="M1079 30.5 1087 34.5 1079 38.5ZM1079 63.5 1087 67.5 1079 71.5Z" fill={ORANGE} />
        <path d="M183 154.5H149M259.5 508V531" stroke={CYAN} />
        <path d="M150 150.5 142 154.5 150 158.5ZM255.5 530 259.5 538 263.5 530Z" fill={CYAN} />
        <path d="M210 364.5H150" stroke={DARK} />
        <path d="M698 503V531" stroke="#2f5597" strokeWidth="1.4" />
        <path d="M150 360.5 142 364.5 150 368.5ZM694 530 698 538 702 530Z" fill={DARK} />
      </Arrows>

      <Callout $x={5} $y={102.5} $lh={25.7}>
        <Fit w={88}>Barra de</Fit><Fit w={136}>herramientas</Fit><Fit w={31}>del</Fit>
        <Fit w={145}>administrador</Fit><Fit w={137}>de fuentes de</Fit><Fit w={57}>datos</Fit>
      </Callout>
      <Callout $x={1097} $y={21}><Fit w={148}>Barra de menú</Fit></Callout>
      <Callout $x={1097} $y={51}><Fit w={89}>Barra de</Fit><Fit w={126}>herramienta</Fit></Callout>
      <Callout $x={16} $y={338}><Fit w={161}>Panel de capas,</Fit><Fit w={108}>navegador</Fit></Callout>
      <Callout $x={195} $y={535}><Fit w={191}>Barra de búsqueda</Fit><Fit w={120}>de opciones</Fit></Callout>
      <Callout $x={633} $y={540}><Fit w={89}>Barra de</Fit><Fit w={69}>estado</Fit></Callout>
    </Page>
  );
}
